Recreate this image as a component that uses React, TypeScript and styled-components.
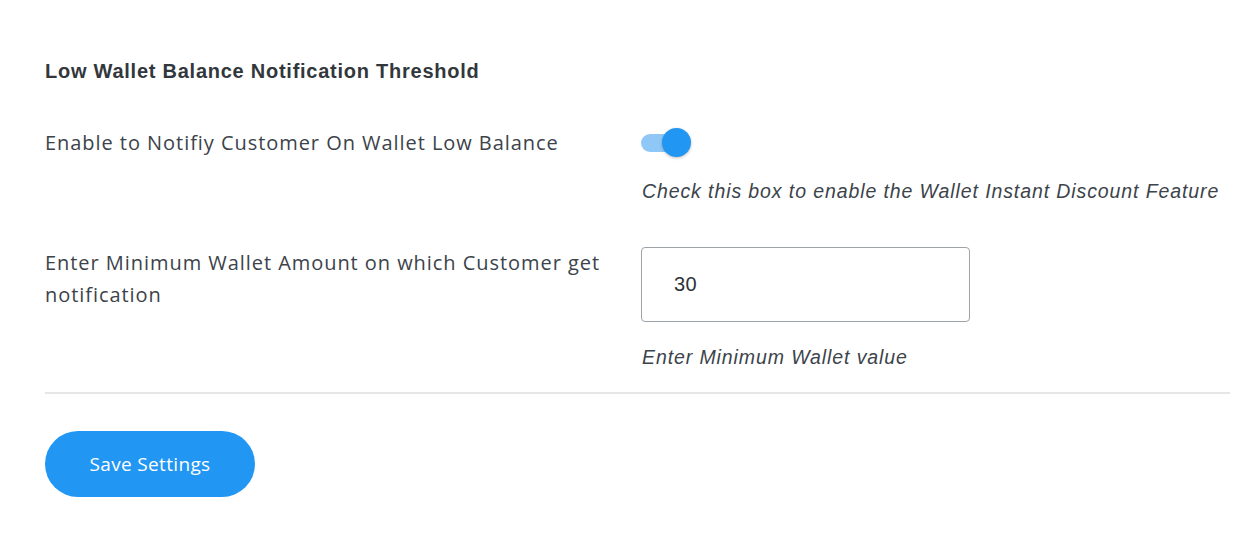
import React, { useState } from "react";
import styled, { createGlobalStyle } from "styled-components";

const Global = createGlobalStyle`
  html, body { margin: 0; padding: 0; background: #fff; }
  * { box-sizing: border-box; }
`;

const Page = styled.div`
  padding: 58px 31px 0 45px;
  width: 1260px;
`;

const Heading = styled.h2`
  margin: 0 0 43px;
  font-family: "Liberation Sans", Arial, sans-serif;
  font-weight: 700;
  font-size: 20px;
  letter-spacing: 0.75px;
  line-height: 26px;
  color: #32373c;
`;

const Row = styled.div<{ $mb: number }>`
  display: grid;
  grid-template-columns: 596px 1fr;
  margin-bottom: ${(p) => p.$mb}px;
`;

const Label = styled.div`
  max-width: 572px;
  font-family: "Open Sans", sans-serif;
  font-size: 20px;
  letter-spacing: 0.95px;
  line-height: 32px;
  color: #3c434a;
`;

const Control = styled.div`
  display: flex;
  flex-direction: column;
  align-items: flex-start;
`;

const Help = styled.p<{ $mt: number }>`
  margin: ${(p) => p.$mt}px 0 0 1px;
  font-family: "Liberation Sans", Arial, sans-serif;
  font-style: italic;
  font-size: 19.5px;
  letter-spacing: 0.9px;
  line-height: 24px;
  color: #3c434a;
`;

const SwitchButton = styled.button`
  position: relative;
  width: 50px;
  height: 30px;
  border: 0;
  padding: 0;
  background: transparent;
  cursor: pointer;
  margin-top: 1px;
`;

const Track = styled.span<{ $on: boolean }>`
  position: absolute;
  left: 0;
  top: 6px;
  width: 44px;
  height: 18px;
  border-radius: 9px;
  background: ${(p) => (p.$on ? "#8fc8f7" : "#c7ccd1")};
`;

const Knob = styled.span<{ $on: boolean }>`
  position: absolute;
  top: 0;
  left: ${(p) => (p.$on ? "21px" : "0")};
  width: 29px;
  height: 29px;
  border-radius: 50%;
  background: ${(p) => (p.$on ? "#2196f3" : "#f1f1f1")};
  box-shadow: 0 1px 3px rgba(0, 0, 0, 0.25);
`;

const Input = styled.input`
  width: 329px;
  height: 75px;
  border: 1px solid #9ea3a8;
  border-radius: 4px;
  padding: 0 32px;
  font-family: "Liberation Sans", Arial, sans-serif;
  font-size: 20px;
  letter-spacing: 0.5px;
  color: #2c3338;
  outline: none;
`;

const Divider = styled.hr`
  margin: 0;
  border: 0;
  border-top: 2px solid #e6e6e6;
  width: 1185px;
`;

const SaveButton = styled.button`
  margin-top: 37px;
  width: 210px;
  height: 66px;
  border: 0;
  border-radius: 33px;
  background: #2196f3;
  color: #fff;
  font-family: "Open Sans", sans-serif;
  font-size: 19px;
  font-weight: 500;
  letter-spacing: 0.35px;
  cursor: pointer;
`;

export default function App() {
  const [on, setOn] = useState(true);
  const [value, setValue] = useState("30");
  return (
    <Page>
      <Global />
      <Heading>Low Wallet Balance Notification Threshold</Heading>
      <Row $mb={44}>
        <Label>Enable to Notifiy Customer On Wallet Low Balance</Label>
        <Control>
          <SwitchButton onClick={() => setOn(!on)} aria-label="toggle">
            <Track $on={on} />
            <Knob $on={on} />
          </SwitchButton>
          <Help $mt={21}>Check this box to enable the Wallet Instant Discount Feature</Help>
        </Control>
      </Row>
      <Row $mb={23}>
        <Label>Enter Minimum Wallet Amount on which Customer get notification</Label>
        <Control>
          <Input value={value} onChange={(e) => setValue(e.target.value)} />
          <Help $mt={23}>Enter Minimum Wallet value</Help>
        </Control>
      </Row>
      <Divider />
      <SaveButton>Save Settings</SaveButton>
    </Page>
  );
}
